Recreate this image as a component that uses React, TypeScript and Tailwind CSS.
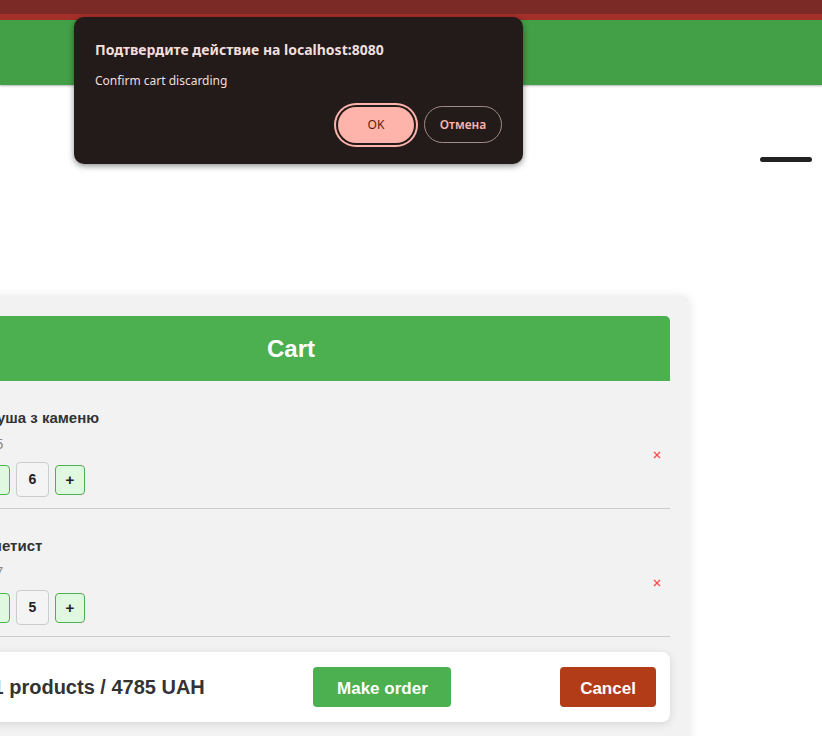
import React, { FC } from 'react';

type Item = {
    name: string;
    price: number;
    qty: number;
};

const items: Item[] = [
    { name: 'Груша з каменю', price: 475, qty: 6 },
    { name: 'Аметист', price: 387, qty: 5 },
];

const CartRow: FC<{ item: Item }> = ({ item }) => {
    return (
        <div className="flex items-center border-b border-[#cccccc] pl-[68px] pr-[7px] pt-[28px] pb-[11px]">
            <div className="flex-1">
                <h3 className="text-[15px] leading-[18px] font-bold text-[#333]">{item.name}</h3>
                <p className="mt-[8px] text-[14px] leading-[18px] text-[#888]">{item.price}</p>
                <div className="mt-[9px] flex items-center gap-[6px]">
                    <button className="w-[30px] h-[30px] rounded-[4px] border border-[#4caf50] bg-[#e0f8e0] text-[15px] font-bold text-[#222]">−</button>
                    <div className="w-[33px] h-[35px] rounded-[4px] border border-[#cccccc] bg-[#f4f4f4] flex items-center justify-center text-[14px] font-bold text-[#222]">
                        {item.qty}
                    </div>
                    <button className="w-[30px] h-[30px] rounded-[4px] border border-[#4caf50] bg-[#e0f8e0] text-[15px] font-bold text-[#222] leading-none">+</button>
                </div>
            </div>
            <button className="mt-[4px] w-[12px] h-[12px] flex items-center justify-center">
                <svg width="8" height="8" viewBox="0 0 8 8">
                    <path d="M1 1 L7 7 M7 1 L1 7" stroke="#ff4d4d" strokeWidth="1.4" />
                </svg>
            </button>
        </div>
    );
};

const ConfirmDialog: FC = () => {
    return (
        <div className="absolute left-[74px] top-[17px] w-[449px] h-[147px] rounded-[10px] bg-[#231a1a] shadow-[0_2px_6px_rgba(0,0,0,0.45)] px-[21px] pt-[23px] font-['Noto_Sans',sans-serif]">
            <h2 className="text-[14px] leading-[20px] font-bold text-[#f1dfdc]">Подтвердите действие на localhost:8080</h2>
            <p className="mt-[12px] text-[12px] leading-[18px] text-[#f1dfdc]">Confirm cart discarding</p>
            <div className="mt-[16px] flex justify-end items-center gap-[10px]">
                <button className="w-[76px] h-[36px] rounded-full bg-[#ffb4ab] text-[12px] text-[#5c1a14] ring-2 ring-[#ffb4ab] ring-offset-2 ring-offset-[#231a1a]">
                    OK
                </button>
                <button className="w-[78px] h-[37px] rounded-full border border-[#a08c8a] text-[12px] font-semibold text-[#ffb4ab]">
                    Отмена
                </button>
            </div>
        </div>
    );
};

export default function App() {
    return (
        <div className="relative min-h-screen overflow-hidden bg-white font-['Liberation_Sans',Arial,sans-serif]">
            <div className="h-[14px] bg-[#7b2a25]" />
            <div className="h-[6px] bg-[#a5302a]" />
            <div className="h-[65px] bg-[#43a047] shadow-[0_1px_2px_rgba(0,0,0,0.3)]" />

            <div className="flex justify-end pr-[10px] pt-[72px]">
                <div className="w-[52px] h-[5px] rounded-full bg-[#222] blur-[0.5px]" />
            </div>

            <div className="mt-[134px] ml-[-108px] w-[798px] min-h-[460px] rounded-tr-[10px] bg-[#f2f2f2] shadow-[0_0_10px_rgba(0,0,0,0.1)] px-[20px] pt-[20px]">
                <div className="h-[65px] rounded-tr-[5px] bg-[#4caf50] flex items-center justify-center">
                    <h1 className="text-[24px] font-bold text-white">Cart</h1>
                </div>

                {items.map((item) => (
                    <CartRow key={item.name} item={item} />
                ))}

                <div className="mt-[15px] h-[70px] rounded-[8px] bg-white shadow-[0_2px_8px_rgba(0,0,0,0.12)] pl-[12px] pr-[14px] flex items-center justify-between">
                    <span className="text-[20px] font-bold text-[#333]">Total: 11 products / 4785 UAH</span>
                    <button className="w-[138px] h-[40px] rounded-[4px] bg-[#4caf50] text-[17px] font-bold text-white pt-[3px]">Make order</button>
                    <button className="w-[96px] h-[40px] rounded-[4px] bg-[#b23b18] text-[17px] font-bold text-white pt-[3px]">Cancel</button>
                </div>
            </div>

            <ConfirmDialog />
        </div>
    );
}
